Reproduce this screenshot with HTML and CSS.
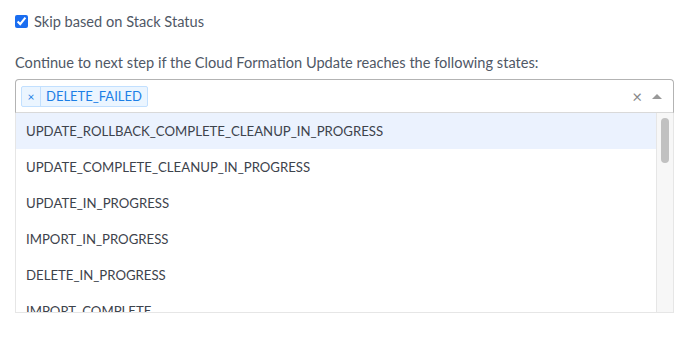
FILE: index.html
```html
<!DOCTYPE html>
<html lang="en">
<head>
    <meta charset="UTF-8">
    <meta name="viewport" content="width=device-width, initial-scale=1.0">
    <title>Stack Status</title>
    <link rel="stylesheet" href="styles.css">
</head>
<body>
    <div class="form">
        <label class="check-row">
            <input type="checkbox" checked>
            <span>Skip based on Stack Status</span>
        </label>

        <div class="field-label">Continue to next step if the Cloud Formation Update reaches the following states:</div>

        <div class="select">
            <div class="select-values">
                <div class="tag">
                    <span class="tag-remove">×</span>
                    <span class="tag-label">DELETE_FAILED</span>
                </div>
            </div>
            <span class="select-clear">×</span>
            <span class="select-arrow"></span>
        </div>

        <div class="menu">
            <ul class="menu-list">
                <li class="focused">UPDATE_ROLLBACK_COMPLETE_CLEANUP_IN_PROGRESS</li>
                <li>UPDATE_COMPLETE_CLEANUP_IN_PROGRESS</li>
                <li>UPDATE_IN_PROGRESS</li>
                <li>IMPORT_IN_PROGRESS</li>
                <li>DELETE_IN_PROGRESS</li>
                <li>IMPORT_COMPLETE</li>
            </ul>
            <div class="scroll-track">
                <div class="scroll-thumb"></div>
            </div>
        </div>
    </div>
</body>
</html>
```

FILE: styles.css
```css
body{
    margin: 0;
    font-family: "Lato", "Open Sans", sans-serif;
    color: #4f5866;
    background: #fff;
}

.form{
    padding: 13px 21px 0 15px;
}

.check-row{
    display: flex;
    align-items: center;
    gap: 6px;
    font-size: 14.6px;
    height: 16px;
}

.check-row input{
    width: 13px;
    height: 13px;
    margin: 0;
    accent-color: #1a6df0;
}

.field-label{
    margin-top: 26px;
    font-size: 14.6px;
    line-height: 16px;
}

.select{
    margin-top: 8px;
    height: 32px;
    border: 1px solid #b3b3b3;
    border-bottom-color: #d9d9d9;
    border-radius: 4px 4px 0 0;
    display: flex;
    align-items: center;
    padding: 0 11px 0 5px;
}

.select-values{
    flex: 1;
    display: flex;
}

.tag{
    display: flex;
    height: 19px;
    border: 1px solid #c2e0ff;
    border-radius: 2px;
    background: #ebf5ff;
    color: #1b7fe6;
    font-size: 13px;
    line-height: 19px;
}

.tag-remove{
    width: 18px;
    text-align: center;
    border-right: 1px solid #c2e0ff;
    font-size: 12px;
}

.tag-label{
    padding: 0 5px;
}

.select-clear{
    color: #888;
    font-size: 17px;
    line-height: 1;
    margin-right: 10px;
}

.select-arrow{
    width: 0;
    height: 0;
    border-left: 5px solid transparent;
    border-right: 5px solid transparent;
    border-bottom: 5px solid #999;
}

.menu{
    display: flex;
    height: 199px;
    border: 1px solid #e6e6e6;
    border-top: none;
    overflow: hidden;
}

.menu-list{
    flex: 1;
    list-style: none;
    margin: 0;
    padding: 0;
}

.menu-list li{
    height: 36px;
    line-height: 36px;
    padding-left: 10px;
    font-size: 13.2px;
    color: #3d434c;
    white-space: nowrap;
}

.menu-list li.focused{
    background: #ebf2fe;
}

.scroll-track{
    width: 16px;
    background: #f7f7f7;
    border-left: 1px solid #e6e6e6;
    display: flex;
    justify-content: center;
    padding-top: 5px;
}

.scroll-thumb{
    width: 8px;
    height: 45px;
    border-radius: 4px;
    background: #c1c1c1;
}
```
